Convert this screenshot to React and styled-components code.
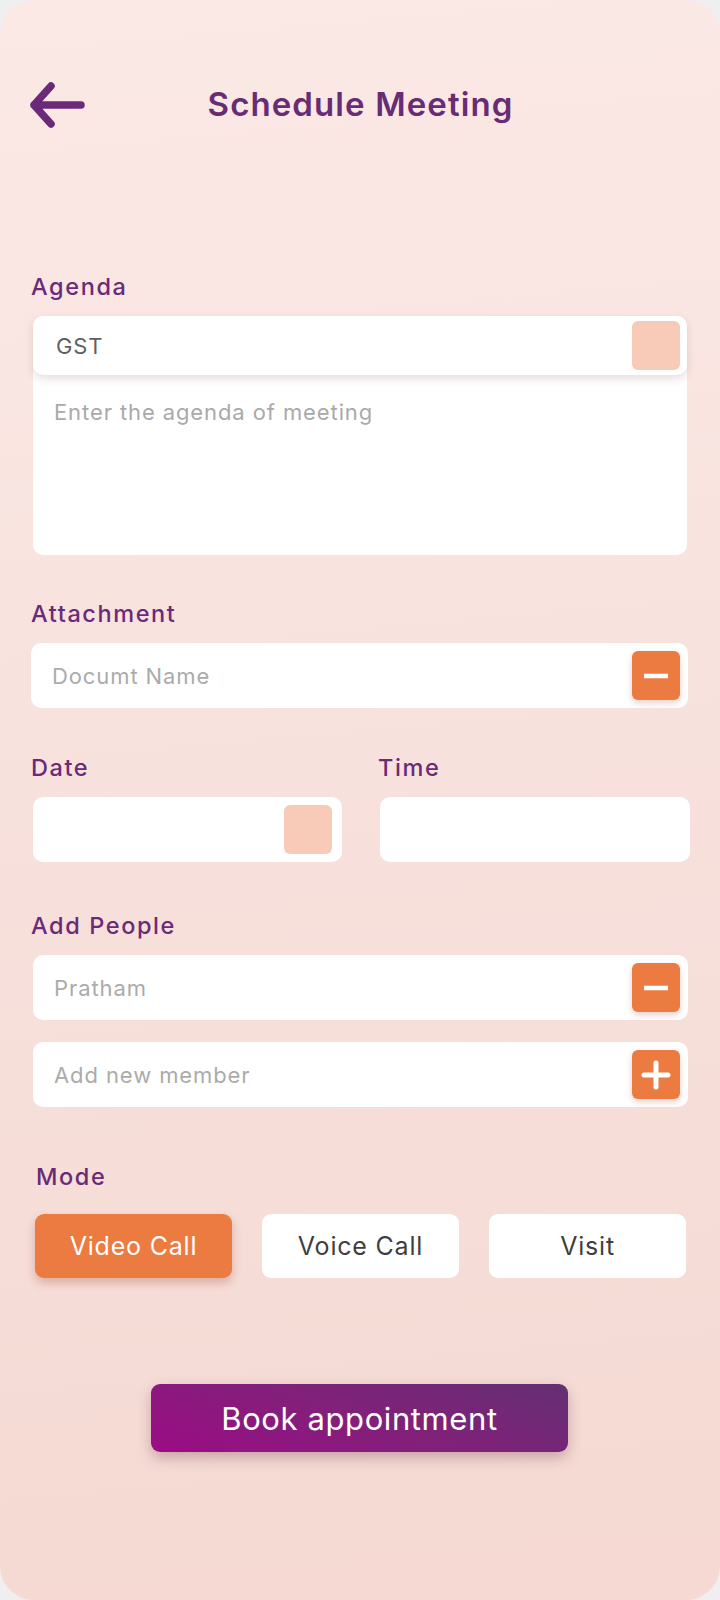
import React from 'react'
import styled, { createGlobalStyle } from 'styled-components'

const GlobalStyle = createGlobalStyle`
  html, body {
    margin: 0;
    padding: 0;
    background: #efefef;
  }
  * {
    box-sizing: border-box;
  }
`;

const FONT = `Inter, "Open Sans", sans-serif`;

const Minus = () => (
  <svg width="30" height="30" viewBox="0 0 30 30">
    <path d="M3 15 H27" stroke="#fff" strokeWidth="4.5" />
  </svg>
)

const Plus = () => (
  <svg width="30" height="30" viewBox="0 0 30 30">
    <path d="M3 15 H27 M15 3 V27" stroke="#fff" strokeWidth="5" strokeLinecap="round" />
  </svg>
)

const App = () => {
  const modes = ['Video Call', 'Voice Call', 'Visit']
  const active = 'Video Call'

  return (
    <Screen>
      <GlobalStyle />
      <Header>
        <BackButton aria-label="back">
          <svg width="58" height="46" viewBox="0 0 58 46">
            <path
              d="M23 4 L6 23 L23 42 M6 23 H53"
              fill="none"
              stroke="#6a2a78"
              strokeWidth="7.5"
              strokeLinecap="round"
              strokeLinejoin="round"
            />
          </svg>
        </BackButton>
        <Title>Schedule Meeting</Title>
      </Header>

      <Section $top={145}>
        <Label>Agenda</Label>
        <AgendaCard>
          <SubjectRow>
            <FieldText $dark>GST</FieldText>
            <Square $peach />
          </SubjectRow>
          <AgendaText>Enter the agenda of meeting</AgendaText>
        </AgendaCard>
      </Section>

      <Section $top={45}>
        <Label>Attachment</Label>
        <Field $left={31}>
          <FieldText>Documt Name</FieldText>
          <Square><Minus /></Square>
        </Field>
      </Section>

      <Section $top={46}>
        <Split>
          <Column>
            <Label>Date</Label>
            <Field $right={10}>
              <span />
              <Square $peach />
            </Field>
          </Column>
          <Column>
            <Label>Time</Label>
            <Field />
          </Column>
        </Split>
      </Section>

      <Section $top={50}>
        <Label>Add People</Label>
        <Field>
          <FieldText>Pratham</FieldText>
          <Square><Minus /></Square>
        </Field>
        <Field $gap={22}>
          <FieldText>Add new member</FieldText>
          <Square><Plus /></Square>
        </Field>
      </Section>

      <Section $top={56}>
        <Label $indent={5}>Mode</Label>
        <ModeRow>
          {modes.map((m) => (
            <ModeButton key={m} $active={m === active}>{m}</ModeButton>
          ))}
        </ModeRow>
      </Section>

      <Footer>
        <BookButton>Book appointment</BookButton>
      </Footer>
    </Screen>
  )
}

export default App

const Screen = styled.div`
  width: 720px;
  height: 1600px;
  border-radius: 34px;
  overflow: hidden;
  background: linear-gradient(175deg, #fbe9e6 0%, #f7e0db 55%, #f5d9d2 100%);
  padding: 0 32px 0 33px;
  font-family: ${FONT};
  display: flex;
  flex-direction: column;
`;

const Header = styled.div`
  position: relative;
  height: 46px;
  margin-top: 82px;
  display: flex;
  align-items: center;
  justify-content: center;
`;

const BackButton = styled.div`
  position: absolute;
  left: -5px;
  top: 0;
  display: flex;
`;

const Title = styled.h1`
  margin: 0 0 2px 0;
  font-size: 33px;
  font-weight: 600;
  letter-spacing: 1.1px;
  color: #672c74;
`;

const Section = styled.div`
  margin-top: ${(p) => p.$top}px;
  display: flex;
  flex-direction: column;
`;

const Label = styled.div`
  font-size: 23.5px;
  font-weight: 500;
  line-height: 28px;
  letter-spacing: 1.6px;
  color: #6b2a78;
  margin: 0 0 15px ${(p) => (p.$indent || 0) - 2}px;
`;

const AgendaCard = styled.div`
  background: #fff;
  border-radius: 10px;
  height: 239px;
  width: 654px;
`;

const SubjectRow = styled.div`
  height: 59px;
  border-radius: 10px;
  background: #fff;
  box-shadow: 0 4px 8px rgba(120, 80, 80, 0.18);
  display: flex;
  align-items: center;
  justify-content: space-between;
  padding: 0 7px 0 23px;
`;

const AgendaText = styled.div`
  padding: 24px 0 0 21px;
  font-size: 22px;
  letter-spacing: 0.9px;
  color: #a9a9a9;
`;

const Field = styled.div`
  height: 65px;
  background: #fff;
  border-radius: 10px;
  margin-top: ${(p) => p.$gap || 0}px;
  margin-left: ${(p) => (p.$left || 33) - 33}px;
  display: flex;
  align-items: center;
  justify-content: space-between;
  padding: 0 ${(p) => p.$right || 8}px 0 21px;
`;

const FieldText = styled.span`
  font-size: 22px;
  letter-spacing: 0.9px;
  color: ${(p) => (p.$dark ? '#5f5f5f' : '#ababab')};
`;

const Square = styled.div`
  width: 48px;
  height: 49px;
  border-radius: 6px;
  background: ${(p) => (p.$peach ? '#f7cbb8' : '#ec7b42')};
  box-shadow: ${(p) => (p.$peach ? 'none' : '0 3px 6px rgba(150, 70, 40, 0.25)')};
  display: flex;
  align-items: center;
  justify-content: center;
`;

const Split = styled.div`
  display: grid;
  grid-template-columns: 309px 310px;
  column-gap: 38px;
`;

const Column = styled.div`
  display: flex;
  flex-direction: column;
`;

const ModeRow = styled.div`
  display: grid;
  grid-template-columns: repeat(3, 197px);
  column-gap: 30px;
  margin-left: 2px;
  margin-top: 8px;
`;

const ModeButton = styled.div`
  height: 64px;
  border-radius: 9px;
  display: flex;
  align-items: center;
  justify-content: center;
  font-size: 25px;
  letter-spacing: 0.8px;
  background: ${(p) => (p.$active ? '#ec7b42' : '#fff')};
  color: ${(p) => (p.$active ? '#fff' : '#3f3f3f')};
  box-shadow: ${(p) => (p.$active ? '0 5px 10px rgba(150, 70, 40, 0.3)' : 'none')};
`;

const Footer = styled.div`
  display: flex;
  justify-content: center;
  margin-top: 106px;
`;

const BookButton = styled.div`
  width: 417px;
  height: 68px;
  border-radius: 9px;
  background: linear-gradient(20deg, #9b0c85 0%, #82207a 50%, #642f73 100%);
  box-shadow: 0 6px 14px rgba(100, 40, 60, 0.3);
  color: #fff;
  font-size: 31px;
  font-weight: 400;
  letter-spacing: 0.6px;
  display: flex;
  align-items: center;
  justify-content: center;
  margin-left: -2px;
`;
